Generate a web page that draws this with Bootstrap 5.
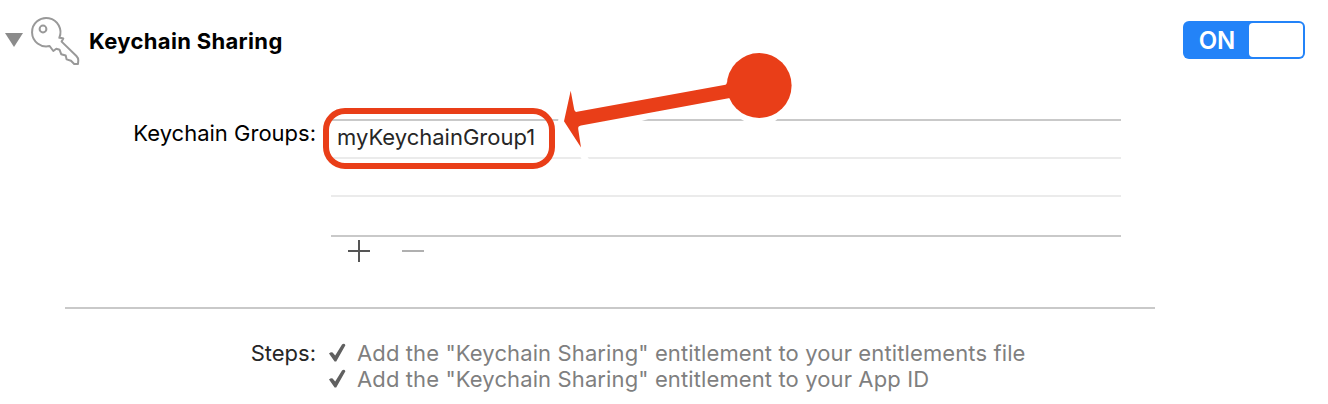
<!DOCTYPE html>
<html lang="en">
<head>
<meta charset="utf-8">
<meta name="viewport" content="width=device-width, initial-scale=1">
<title>Keychain Sharing</title>
<link rel="stylesheet" href="https://cdn.jsdelivr.net/npm/bootstrap@5.3.0/dist/css/bootstrap.min.css">
<style>
  body { font-family: Inter, "Liberation Sans", sans-serif; font-size: 22px; line-height: 26px; color: #000; background: #fff; overflow: hidden; }
  .panel { width: 1328px; height: 404px; }
  .head { height: 82px; padding: 15px 23px 0 5px; }
  .head h1 { font-size: 22px; line-height: 26px; letter-spacing: .33px; margin: 13px 0 0 9px; }
  .disclosure { margin-top: 18px; }
  .key-icon { margin-left: 6px; }
  .toggle { width: 122px; height: 38px; margin-top: 6px; padding: 2px; border-radius: 6px; background: #2383f8; color: #fff; font-weight: 600; }
  .toggle .word { width: 64px; padding-top: 1px; font-size: 24px; }
  .toggle .knob { width: 54px; border-radius: 4px; background: #fff; }
  .label-col { width: 316px; }
  .groups { height: 225px; }
  .groups .label-col { padding-top: 38px; }
  .group-list { width: 790px; margin: 37px 0 0 15px; }
  .group-list .list-group-item { height: 38px; padding: 3px 6px 0; border: 0; border-top: 2px solid #ebebeb; border-radius: 0; color: #262626; background: none; }
  .group-list .list-group-item:first-child { border-top-color: #c9c9c9; }
  .group-list .list-group-item:last-child { height: 42px; border-bottom: 2px solid #c9c9c9; }
  .tools { gap: 32px; padding: 3px 17px; }
  .divider { width: 1090px; height: 2px; margin-left: 65px; background: #c9c9c9; }
  .steps { padding-top: 31px; }
  .steps .label-col { color: #262626; }
  .steps ul { margin-left: 12px; color: #7f7f7f; letter-spacing: .115px; }
  .steps li { gap: 11px; height: 26px; }
  .ring { left: 323px; top: 108px; width: 232px; height: 61px; border: 6px solid #e93e18; border-radius: 22px; }
  .arrow { left: 550px; top: 40px; pointer-events: none; }
</style>
</head>
<body>
<main class="panel position-relative">
  <header class="head d-flex align-items-start">
    <svg class="disclosure" width="18" height="14"><path d="M0 0H18L9 14Z" fill="#8b8b8b"/></svg>
    <svg class="key-icon" width="51" height="52" viewBox="29 15 51 52" fill="none" stroke="#999" stroke-width="2" stroke-linejoin="round">
      <path d="M49.6 46A14.2 14.2 0 1 1 59.3 37.8Q61.4 37.8 63.3 38.5L61.6 41.6L76.4 56Q78.3 58 78.3 60.2L78 64L74.2 64L71 60.8L66.6 59.4L65.7 55.5L61.2 54.2L59.6 49.8L56.3 48.7L53.3 51Z"/>
      <circle cx="43" cy="29" r="3.4"/>
    </svg>
    <h1 class="fw-bold">Keychain Sharing</h1>
    <div class="toggle d-flex ms-auto">
      <span class="word d-flex align-items-center justify-content-center">ON</span><span class="knob"></span>
    </div>
  </header>

  <section class="groups d-flex align-items-start">
    <div class="label-col text-end">Keychain Groups:</div>
    <div class="group-list">
      <ul class="list-group">
        <li class="list-group-item">myKeychainGroup1</li>
        <li class="list-group-item"></li>
        <li class="list-group-item"></li>
      </ul>
      <div class="tools d-flex">
        <svg width="22" height="22"><path d="M0 11H22M11 0V22" stroke="#555" stroke-width="2"/></svg>
        <svg width="22" height="22"><path d="M0 11H22" stroke="#b0b0b0" stroke-width="2"/></svg>
      </div>
    </div>
  </section>

  <div class="divider"></div>

  <section class="steps d-flex">
    <div class="label-col text-end">Steps:</div>
    <ul class="list-unstyled mb-0">
      <li class="d-flex align-items-center"><svg width="18" height="20" viewBox="0 0 18 20"><path d="M1 10.6Q2.8 8.8 4.6 9.4L7.2 12.6L14 1.4Q16.4-.2 17.4 2.2L8.2 18.6H6.6Z" fill="#606060"/></svg><span>Add the "Keychain Sharing" entitlement to your entitlements file</span></li>
      <li class="d-flex align-items-center"><svg width="18" height="20" viewBox="0 0 18 20"><path d="M1 10.6Q2.8 8.8 4.6 9.4L7.2 12.6L14 1.4Q16.4-.2 17.4 2.2L8.2 18.6H6.6Z" fill="#606060"/></svg><span>Add the "Keychain Sharing" entitlement to your App ID</span></li>
    </ul>
  </section>

  <!-- Callout over the first group -->
  <div class="ring position-absolute"></div>
  <svg class="arrow position-absolute" width="250" height="130" viewBox="550 40 250 130">
    <path d="M558.5 118.5H650L640 121.5H558ZM740 118.5H778L774.5 121.5H745ZM580 156H587L589.5 160H582Z" fill="#fff"/>
    <path d="M564 121.3L570.7 90.7L574.2 109.5Q574.8 112.3 577 111.8L725.5 84.7Q726.8 84.3 726.8 82.5L740 82V97L728.5 98.2L581 125.6Q577.9 126.1 578.2 129L581 147.5Z" fill="#e93e18"/>
    <circle cx="759.2" cy="85.5" r="32.4" fill="#e93e18"/>
  </svg>
</main>
<script src="https://cdn.jsdelivr.net/npm/bootstrap@5.3.0/dist/js/bootstrap.bundle.min.js"></script>
</body>
</html>
